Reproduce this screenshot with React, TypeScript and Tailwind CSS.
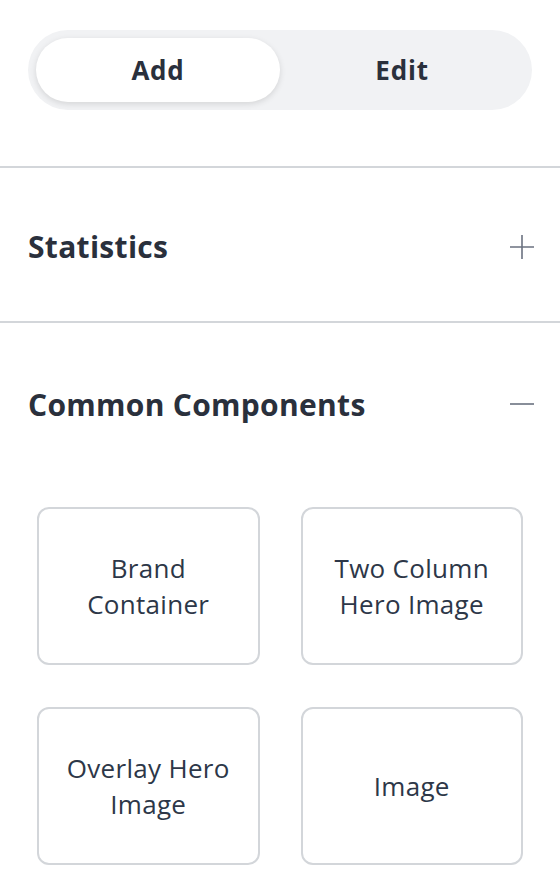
import { useState } from "react";

const components = [
  "Brand Container",
  "Two Column Hero Image",
  "Overlay Hero Image",
  "Image",
];

function PlusIcon() {
  return (
    <svg width="26" height="26" viewBox="0 0 26 26" className="text-[#6b7280] mt-[5px]">
      <path d="M13 1v24M1 13h24" stroke="currentColor" strokeWidth="1.6" />
    </svg>
  );
}

function MinusIcon() {
  return (
    <svg width="26" height="26" viewBox="0 0 26 26" className="text-[#6b7280]">
      <path d="M1 13h24" stroke="currentColor" strokeWidth="1.6" />
    </svg>
  );
}

export default function App() {
  const [mode, setMode] = useState<"add" | "edit">("add");

  return (
    <div className="w-[560px] h-[888px] overflow-hidden bg-white text-[#2a303c] font-['Open_Sans',sans-serif]">
      {/* Add / Edit toggle */}
      <div className="px-7 pt-[30px] pb-[56px]">
        <div className="flex h-20 rounded-full bg-[#f1f2f4] p-2">
          {(["add", "edit"] as const).map((m) => (
            <button
              key={m}
              onClick={() => setMode(m)}
              className={[
                "flex-1 rounded-full text-[26px] font-bold tracking-[0.8px]",
                mode === m ? "bg-white shadow-[0_2px_6px_rgba(0,0,0,0.12)]" : "",
              ].join(" ")}
            >
              {m === "add" ? "Add" : "Edit"}
            </button>
          ))}
        </div>
      </div>

      {/* Statistics */}
      <div className="border-t-2 border-[#d3d6da] h-[155px] pl-7 pr-[25px] flex items-center justify-between">
        <h2 className="text-[30px] font-bold tracking-[0.3px] pt-[3px]">Statistics</h2>
        <PlusIcon />
      </div>

      {/* Common Components */}
      <div className="border-t-2 border-[#d3d6da]">
        <div className="h-[162px] pl-7 pr-[25px] flex items-center justify-between">
          <h2 className="text-[30px] font-bold tracking-[0.3px]">Common Components</h2>
          <MinusIcon />
        </div>
        <div className="grid grid-cols-2 gap-x-[41px] gap-y-[42px] px-[37px] pt-[22px]">
          {components.map((c) => (
            <div
              key={c}
              className="h-[158px] rounded-xl border-2 border-[#d3d6da] flex items-center justify-center px-4 text-center text-[26px] leading-[36px] tracking-[0.3px] text-[#2d3748]"
            >
              {c}
            </div>
          ))}
        </div>
      </div>
    </div>
  );
}
